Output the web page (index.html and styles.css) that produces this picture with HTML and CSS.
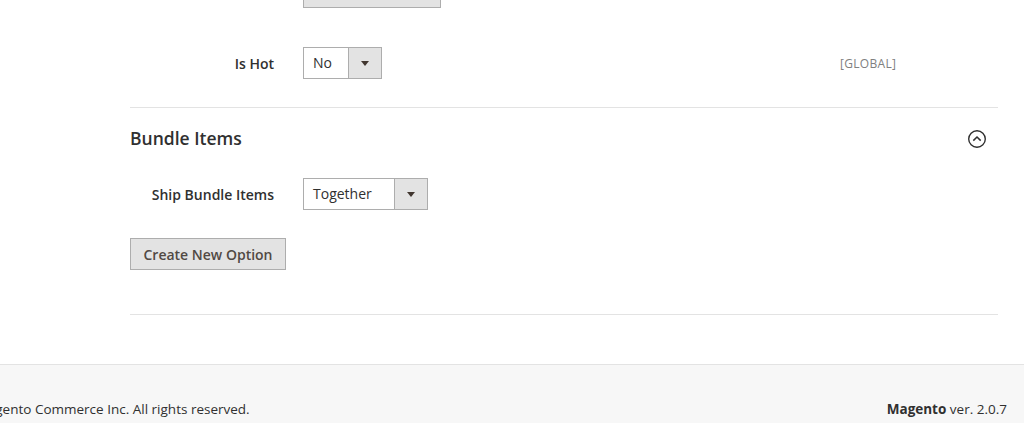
FILE: index.html
```html
<!DOCTYPE html>
<html lang="en">
<head>
<meta charset="utf-8">
<title>Bundle Items</title>
<link rel="stylesheet" href="styles.css">
</head>
<body>
<div class="page">
  <div class="stub-row"><span class="stub-button"></span></div>

  <div class="field field-first">
    <label class="field-label">Is Hot</label>
    <div class="field-control">
      <div class="select select-no"><span class="select-value">No</span><span class="select-arrow"></span></div>
    </div>
    <div class="field-scope">[GLOBAL]</div>
  </div>

  <section class="section">
    <div class="section-header">
      <h2 class="section-title">Bundle Items</h2>
      <svg class="collapse-icon" width="20" height="20" viewBox="0 0 20 20" aria-hidden="true">
        <circle cx="10" cy="10" r="8.3" fill="none" stroke="#303030" stroke-width="1.4"/>
        <path d="M6.3 11.6 L10 8 L13.7 11.6" fill="none" stroke="#303030" stroke-width="1.5"/>
      </svg>
    </div>

    <div class="field field-ship">
      <label class="field-label">Ship Bundle Items</label>
      <div class="field-control">
        <div class="select select-together"><span class="select-value">Together</span><span class="select-arrow"></span></div>
      </div>
    </div>

    <button class="action-button" type="button">Create New Option</button>
  </section>
</div>

<footer class="footer">
  <p class="copyright">Copyright © 2016 Magento Commerce Inc. All rights reserved.</p>
  <p class="version"><strong>Magento</strong> ver. 2.0.7</p>
</footer>
</body>
</html>
```

FILE: styles.css
```css
html, body {
  margin: 0;
  padding: 0;
}
body {
  background: #fff;
  font-family: "Open Sans", "Liberation Sans", sans-serif;
  color: #303030;
  overflow: hidden;
}
.page {
  padding: 0 26px 0 130px;
}
.stub-row {
  height: 32px;
  margin-top: -24px;
}
.stub-button {
  display: block;
  margin-left: 173px;
  width: 138px;
  height: 32px;
  box-sizing: border-box;
  background: #e3e3e3;
  border: 1px solid #adadad;
}
.field {
  display: flex;
  align-items: center;
  height: 32px;
}
.field-first {
  margin-top: 39px;
}
.field-label {
  width: 144px;
  margin-right: 29px;
  text-align: right;
  font-size: 14px;
  font-weight: 600;
  color: #303030;
  white-space: nowrap;
}
.field-control {
  width: 537px;
}
.field-scope {
  font-size: 12px;
  color: #808080;
  letter-spacing: 0.3px;
}
.select {
  display: flex;
  height: 32px;
  box-sizing: border-box;
  border: 1px solid #adadad;
  background: #fff;
}
.select-no {
  width: 79px;
}
.select-together {
  width: 125px;
}
.select-value {
  flex: 1;
  padding-left: 9px;
  font-size: 14px;
  line-height: 30px;
  color: #303030;
}
.select-arrow {
  width: 32px;
  border-left: 1px solid #adadad;
  background: #e3e3e3;
  position: relative;
}
.select-arrow::after {
  content: "";
  position: absolute;
  left: 50%;
  top: 50%;
  margin-left: -4px;
  margin-top: -2px;
  border-left: 4px solid transparent;
  border-right: 4px solid transparent;
  border-top: 5px solid #41362f;
}
.section {
  margin-top: 28px;
  border-top: 1px solid #e3e3e3;
  border-bottom: 1px solid #e3e3e3;
  padding-bottom: 44px;
}
.section-header {
  display: flex;
  align-items: center;
  justify-content: space-between;
  padding-top: 18px;
  height: 24px;
}
.section-title {
  margin: 0;
  font-size: 17.5px;
  font-weight: 600;
  line-height: 24px;
  color: #303030;
}
.collapse-icon {
  display: block;
  margin-right: 11px;
  margin-top: 2px;
}
.field-ship {
  margin-top: 28px;
}
.action-button {
  display: block;
  margin-top: 28px;
  height: 32px;
  padding: 0;
  width: 156px;
  white-space: nowrap;
  background: #e3e3e3;
  border: 1px solid #adadad;
  border-radius: 0;
  font-family: "Open Sans", "Liberation Sans", sans-serif;
  font-size: 14px;
  font-weight: 600;
  color: #514943;
  text-align: center;
}
.footer {
  margin-top: 49px;
  border-top: 1px solid #e3e3e3;
  background: #f7f7f7;
  height: 58px;
  display: flex;
  justify-content: space-between;
  align-items: flex-start;
  padding: 0 17px 0 0;
}
.footer p {
  margin: 35px 0 0;
  font-size: 13.5px;
  line-height: 18px;
  color: #303030;
  white-space: nowrap;
}
.footer .copyright {
  margin-left: -138px;
}
.version strong {
  font-weight: 700;
  color: #303030;
}
```
